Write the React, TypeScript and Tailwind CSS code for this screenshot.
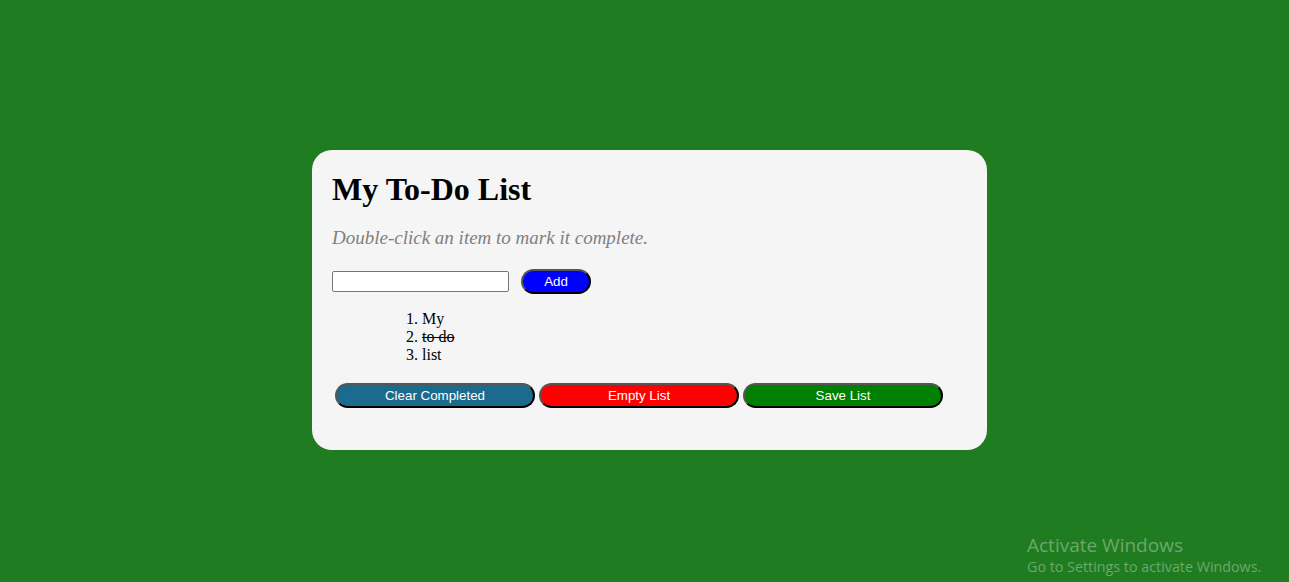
import { useState } from 'react'

const btnBase =
  'h-[25px] rounded-full border-2 border-t-[#555] border-l-[#555] border-r-black border-b-black text-white text-[13.33px] font-["Liberation_Sans",Arial,sans-serif] leading-none'

function App(): JSX.Element {
  const [items] = useState([
    { text: 'My', done: false },
    { text: 'to do', done: true },
    { text: 'list', done: false },
  ])

  return (
    <div className="relative w-full h-[582px] bg-[#1f7c20] flex justify-center items-center pl-[10px] pt-[18px] overflow-hidden">
      <div className="w-[675px] h-[300px] bg-[#f5f5f5] rounded-[20px] px-[20px] font-['Liberation_Serif','Times_New_Roman',serif] text-black">
        <h1 className="text-[32px] font-bold leading-[37px] mt-[21px] mb-[19px]">My To-Do List</h1>
        <p className="italic text-[19px] leading-[21px] text-[#808080] mb-[18px]">
          Double-click an item to mark it complete.
        </p>
        <div className="flex items-center h-[25px] mt-[21px]">
          <input
            type="text"
            className="w-[177px] h-[21px] border border-[#767676] rounded-[2px] bg-white px-1 text-[13px] focus:outline-none"
          />
          <button className={`${btnBase} ml-[12px] w-[70px] bg-[#0000ff]`}>Add</button>
        </div>
        <ol className="list-decimal pl-[90px] my-[16px] text-[16px] leading-[18px]">
          {items.map((item, index) =>
            <li key={index} className={item.done ? 'line-through' : ''}>
              {item.text}
            </li>
          )}
        </ol>
        <div className="flex gap-[4px] ml-[3px] mt-[19px]">
          <button className={`${btnBase} w-[200px] bg-[#1b6b8e]`}>Clear Completed</button>
          <button className={`${btnBase} w-[200px] bg-[#ff0000]`}>Empty List</button>
          <button className={`${btnBase} w-[200px] bg-[#008000]`}>Save List</button>
        </div>
      </div>
      <div className="absolute left-[1027px] top-[533px] text-white/35 font-['Open_Sans','Noto_Sans',sans-serif]">
        <div className="text-[19px] leading-[24px]">Activate Windows</div>
        <div className="text-[14.3px] leading-[20px]">Go to Settings to activate Windows.</div>
      </div>
    </div>
  )
}

export default App
